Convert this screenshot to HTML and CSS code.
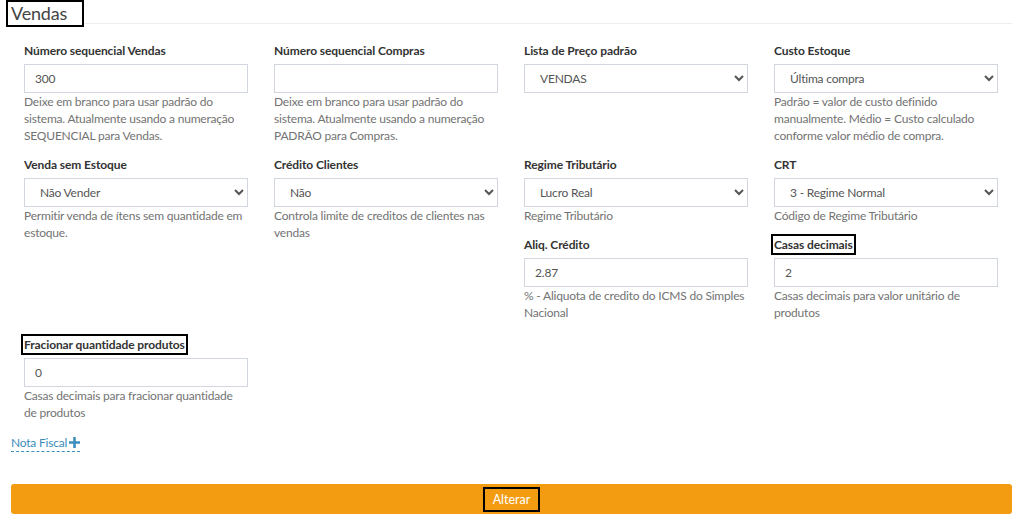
FILE: index.html
```html
<!DOCTYPE html>
<html lang="pt-BR">
<head>
    <meta charset="UTF-8">
    <meta name="viewport" content="width=device-width, initial-scale=1.0">
    <title>Configurações - Vendas</title>
    <link rel="stylesheet" href="styles.css">
</head>
<body>
    <div class="box">
        <div class="box__header">
            <h3 class="box__title">Vendas</h3>
        </div>

        <div class="box__body">
            <div class="form-grid">
                <div class="form-group">
                    <label class="form-label">Número sequencial Vendas</label>
                    <input class="form-control" type="text" value="300">
                    <p class="help-block">Deixe em branco para usar padrão do sistema. Atualmente usando a numeração SEQUENCIAL para Vendas.</p>
                </div>

                <div class="form-group">
                    <label class="form-label">Número sequencial Compras</label>
                    <input class="form-control" type="text" value="">
                    <p class="help-block">Deixe em branco para usar padrão do sistema. Atualmente usando a numeração PADRÃO para Compras.</p>
                </div>

                <div class="form-group">
                    <label class="form-label">Lista de Preço padrão</label>
                    <select class="form-control form-control--select">
                        <option>VENDAS</option>
                    </select>
                </div>

                <div class="form-group">
                    <label class="form-label">Custo Estoque</label>
                    <select class="form-control form-control--select">
                        <option>Última compra</option>
                    </select>
                    <p class="help-block">Padrão = valor de custo definido manualmente. Médio = Custo calculado conforme valor médio de compra.</p>
                </div>

                <div class="form-group form-group--tall">
                    <label class="form-label">Venda sem Estoque</label>
                    <select class="form-control form-control--select">
                        <option>Não Vender</option>
                    </select>
                    <p class="help-block">Permitir venda de ítens sem quantidade em estoque.</p>
                </div>

                <div class="form-group form-group--tall">
                    <label class="form-label">Crédito Clientes</label>
                    <select class="form-control form-control--select">
                        <option>Não</option>
                    </select>
                    <p class="help-block">Controla limite de creditos de clientes nas vendas</p>
                </div>

                <div class="form-group">
                    <label class="form-label">Regime Tributário</label>
                    <select class="form-control form-control--select">
                        <option>Lucro Real</option>
                    </select>
                    <p class="help-block">Regime Tributário</p>
                </div>

                <div class="form-group">
                    <label class="form-label">CRT</label>
                    <select class="form-control form-control--select">
                        <option>3 - Regime Normal</option>
                    </select>
                    <p class="help-block">Código de Regime Tributário</p>
                </div>

                <div class="form-group">
                    <label class="form-label">Aliq. Crédito</label>
                    <input class="form-control" type="text" value="2.87">
                    <p class="help-block">% - Aliquota de credito do ICMS do Simples Nacional</p>
                </div>

                <div class="form-group">
                    <label class="form-label"><span class="mark">Casas decimais</span></label>
                    <input class="form-control" type="text" value="2">
                    <p class="help-block">Casas decimais para valor unitário de produtos</p>
                </div>

                <div class="form-group form-group--last">
                    <label class="form-label"><span class="mark">Fracionar quantidade produtos</span></label>
                    <input class="form-control" type="text" value="0">
                    <p class="help-block">Casas decimais para fracionar quantidade de produtos</p>
                </div>
            </div>

            <a class="toggle-link" href="#">Nota Fiscal<svg class="toggle-link__icon" viewBox="0 0 12 12" width="11" height="11"><path d="M4.6 0h2.8v4.6H12v2.8H7.4V12H4.6V7.4H0V4.6h4.6z" fill="#3c8dbc"/></svg></a>
        </div>

        <div class="box__footer">
            <button class="btn-alterar" type="submit"><span class="mark mark--btn">Alterar</span></button>
        </div>
    </div>
</body>
</html>
```

FILE: styles.css
```css
* {
    box-sizing: border-box;
}

body {
    margin: 0;
    background: #fff;
    color: #333;
    font-family: Lato, "Open Sans", sans-serif;
    font-size: 12px;
    letter-spacing: -0.2px;
}

.box__header {
    margin: 0 12px 0 11px;
    height: 24px;
    border-bottom: 1px solid #eeeeee;
}

.box__title {
    display: inline-block;
    margin: 0 0 0 -5px;
    padding: 0 15px 0 3px;
    border: 2px solid #000;
    background: #fff;
    font-size: 18px;
    font-weight: 400;
    line-height: 23px;
    letter-spacing: -0.2px;
    color: #444;
}

.box__body {
    padding: 18px 0 0 11px;
}

.form-grid {
    display: grid;
    grid-template-columns: repeat(4, 224px);
    column-gap: 26px;
    row-gap: 12px;
    padding-left: 13px;
}

.form-group--tall {
    grid-row: span 2;
}

.form-group--last {
    margin-top: 3px;
}

.form-label {
    display: block;
    margin-bottom: 5px;
    font-weight: 700;
    line-height: 17px;
    letter-spacing: -0.1px;
    color: #333;
}

.form-control {
    display: block;
    width: 100%;
    height: 29px;
    padding: 0 10px;
    border: 1px solid #d2d6de;
    border-radius: 0;
    background: #fff;
    font-family: inherit;
    font-size: 12px;
    letter-spacing: -0.2px;
    color: #555;
    outline: none;
}

.form-control--select {
    padding-left: 11px;
}

.help-block {
    margin: 0;
    line-height: 17px;
    color: #737373;
}

.mark {
    outline: 2px solid #000;
    outline-offset: 1px;
}

.mark--btn {
    display: inline-block;
    padding: 3px 8px;
    outline-offset: 0;
}

.toggle-link {
    display: inline-flex;
    align-items: center;
    margin-top: 13px;
    border-bottom: 1px dashed #3c8dbc;
    line-height: 17px;
    color: #3c8dbc;
    text-decoration: none;
}

.toggle-link__icon {
    margin-left: 2px;
}

.box__footer {
    margin: 32px 12px 0 11px;
}

.btn-alterar {
    display: block;
    width: 100%;
    height: 30px;
    border: 0;
    border-radius: 3px;
    background: #f39c12;
    font-family: inherit;
    font-size: 12.5px;
    color: #fff;
}
```
